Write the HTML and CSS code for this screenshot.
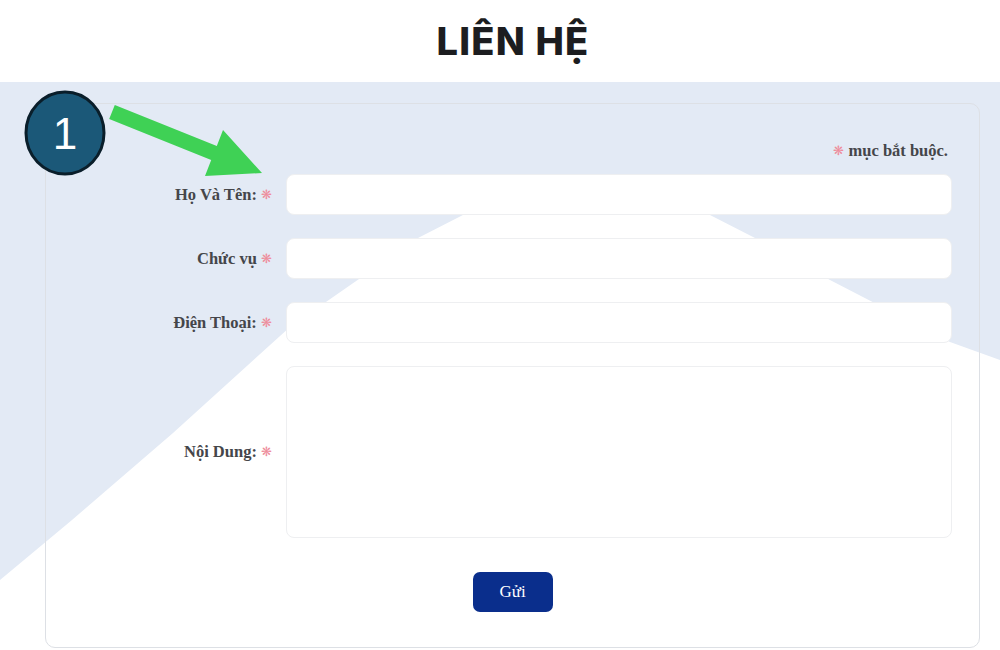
FILE: index.html
```html
<!DOCTYPE html>
<html lang="vi">
<head>
<meta charset="utf-8">
<title>Liên hệ</title>
<link rel="stylesheet" href="styles.css">
</head>
<body>
<header class="page-head">
  <h1 class="title">LIÊN HỆ</h1>
</header>
<main class="contact">
  <svg class="backdrop" viewBox="0 82 1000 568" preserveAspectRatio="none" aria-hidden="true">
    <path d="M0 580 L72 520 L173 433 L290 327 L418 238 L461 216 L492 200 L680 200 L710 215 L755 238 L830 280 L950 342 L1000 360 L1000 650 L0 650 Z" fill="#ffffff"/>
  </svg>
  <form class="card">
    <p class="required-note"><span class="star">❋</span> mục bắt buộc.</p>
    <div class="row">
      <label class="label">Họ Và Tên: <span class="star">❋</span></label>
      <input class="field" type="text">
    </div>
    <div class="row">
      <label class="label">Chức vụ <span class="star">❋</span></label>
      <input class="field" type="text">
    </div>
    <div class="row">
      <label class="label">Điện Thoại: <span class="star">❋</span></label>
      <input class="field" type="text">
    </div>
    <div class="row">
      <label class="label">Nội Dung: <span class="star">❋</span></label>
      <textarea class="field area"></textarea>
    </div>
    <div class="actions">
      <button class="submit" type="button">Gửi</button>
    </div>
  </form>
  <svg class="callout" viewBox="0 0 280 190" aria-hidden="true">
    <polygon points="114.8,105.1 109.2,118.9 211.2,159.9 205,176 262,173 223,130 216.8,146.1" fill="#3fd155"/>
    <ellipse cx="65" cy="133" rx="39" ry="41" fill="#1b5878" stroke="#0a1e2a" stroke-width="3"/>
    <text x="65" y="149" text-anchor="middle" class="badge-num">1</text>
  </svg>
</main>
</body>
</html>
```

FILE: styles.css
```css
* { box-sizing: border-box; }
html, body { margin: 0; padding: 0; background: #ffffff; }
body { width: 1000px; height: 650px; overflow: hidden; position: relative; }

.page-head {
  height: 82px;
  display: flex;
  align-items: center;
  justify-content: center;
  background: #ffffff;
}
.title {
  margin: 0;
  padding-left: 26px;
  font-family: "Inter", "DejaVu Sans", sans-serif;
  font-weight: 800;
  font-size: 38px;
  letter-spacing: 1.2px;
  color: #1c1d20;
  line-height: 1;
}

.contact {
  position: relative;
  height: 568px;
  background: #e3eaf5;
  padding-top: 21px;
}
.backdrop {
  position: absolute;
  left: 0;
  top: 0;
  width: 1000px;
  height: 568px;
}

.card {
  position: relative;
  margin: 0 0 0 45px;
  width: 935px;
  border: 1.5px solid #dde0e5;
  border-radius: 10px;
  padding: 38px 27px 35px 0;
  display: flex;
  flex-direction: column;
  gap: 23px;
  font-family: "Liberation Serif", "Times New Roman", serif;
}

.required-note {
  margin: 0 0 -9px 0;
  text-align: right;
  font-weight: bold;
  font-size: 16.5px;
  color: #45464a;
  line-height: 18px;
  padding-right: 4px;
}

.star {
  color: #ee8d9c;
  font-size: 13px;
  font-weight: normal;
  vertical-align: 1px;
}

.row {
  display: grid;
  grid-template-columns: 226px 1fr;
  column-gap: 14px;
  align-items: center;
}
.label {
  text-align: right;
  font-weight: bold;
  font-size: 16.5px;
  color: #45464a;
  white-space: nowrap;
}
.field {
  height: 41px;
  border: 1px solid #eeeff1;
  border-radius: 8px;
  background: #ffffff;
  outline: none;
  font-family: inherit;
}
.area {
  height: 172px;
  resize: none;
  display: block;
}

.actions {
  display: flex;
  justify-content: center;
  padding-left: 27px;
  margin-top: 11px;
}
.submit {
  width: 80px;
  height: 40px;
  border: none;
  border-radius: 7px;
  background: #0a2e8c;
  color: #ffffff;
  font-family: "Liberation Serif", "Times New Roman", serif;
  font-size: 17px;
}

.callout {
  position: absolute;
  left: 0;
  top: -82px;
  width: 280px;
  height: 190px;
  overflow: visible;
}
.badge-num {
  font-family: "Liberation Sans", Arial, sans-serif;
  font-size: 44px;
  fill: #ffffff;
}
```
